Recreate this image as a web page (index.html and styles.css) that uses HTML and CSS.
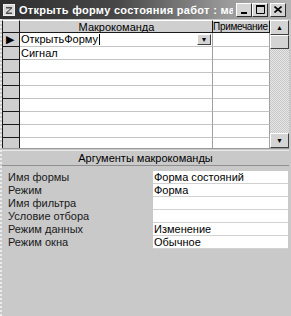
FILE: index.html
```
<!DOCTYPE html>
<html lang="ru">
<head>
    <meta charset="UTF-8">
    <title>Макрос</title>
    <link rel="stylesheet" href="styles.css">
</head>
<body>
    <div class="window">
        <div class="titlebar">
            <svg class="appIcon" width="12" height="12" viewBox="0 0 12 12">
                <rect x="0.5" y="0.5" width="11" height="11" fill="#d8d8d8" stroke="#f0f0f0"/>
                <path d="M3 3h6v1.5L4.5 8.5H9V10H3V8.5L7.5 4.5H3z" fill="#505050"/>
            </svg>
            <div class="titleText">Открыть форму состояния работ : макрос</div>
            <div class="capBtn minBtn">
                <svg width="8" height="8" viewBox="0 0 8 8"><rect x="1" y="6" width="6" height="2" fill="#000"/></svg>
            </div>
            <div class="capBtn">
                <svg width="9" height="9" viewBox="0 0 9 9"><path d="M0.5 1.5h8v7h-8z" fill="none" stroke="#000"/><rect x="0" y="0" width="9" height="2" fill="#000"/></svg>
            </div>
            <div class="capBtn closeBtn">
                <svg width="8" height="7" viewBox="0 0 8 7"><path d="M0.5 0.5l7 6M7.5 0.5l-7 6" stroke="#000" stroke-width="1.6"/></svg>
            </div>
        </div>
        <div class="body">
            <div class="grid">
                <div class="table">
                    <div class="row head">
                        <div class="sel"></div>
                        <div class="cell c1">Макрокоманда</div>
                        <div class="cell c2">Примечание</div>
                    </div>
                    <div class="row first">
                        <div class="sel current">▶</div>
                        <div class="cell c1">ОткрытьФорму<span class="caret"></span><span class="combo">▾</span></div>
                        <div class="cell c2"></div>
                    </div>
                    <div class="row"><div class="sel"></div><div class="cell c1">Сигнал</div><div class="cell c2"></div></div>
                    <div class="row"><div class="sel"></div><div class="cell c1"></div><div class="cell c2"></div></div>
                    <div class="row"><div class="sel"></div><div class="cell c1"></div><div class="cell c2"></div></div>
                    <div class="row"><div class="sel"></div><div class="cell c1"></div><div class="cell c2"></div></div>
                    <div class="row"><div class="sel"></div><div class="cell c1"></div><div class="cell c2"></div></div>
                    <div class="row"><div class="sel"></div><div class="cell c1"></div><div class="cell c2"></div></div>
                    <div class="row"><div class="sel"></div><div class="cell c1"></div><div class="cell c2"></div></div>
                    <div class="row"><div class="sel"></div><div class="cell c1"></div><div class="cell c2"></div></div>
                </div>
                <div class="scrollbar">
                    <div class="sbBtn">▲</div>
                    <div class="thumb"></div>
                    <div class="track"></div>
                    <div class="sbBtn">▼</div>
                </div>
            </div>
            <div class="argsHead">Аргументы макрокоманды</div>
            <div class="props">
                <div class="prop"><div class="label">Имя формы</div><div class="value">Форма состояний</div></div>
                <div class="prop"><div class="label">Режим</div><div class="value">Форма</div></div>
                <div class="prop"><div class="label">Имя фильтра</div><div class="value"></div></div>
                <div class="prop"><div class="label">Условие отбора</div><div class="value"></div></div>
                <div class="prop"><div class="label">Режим данных</div><div class="value">Изменение</div></div>
                <div class="prop"><div class="label">Режим окна</div><div class="value">Обычное</div></div>
            </div>
        </div>
    </div>
</body>
</html>
```

FILE: styles.css
```
html,
body {
    margin: 0;
    padding: 0;
    width: 291px;
    height: 316px;
    overflow: hidden;
    background: #c9c9c9;
    font-family: "Liberation Sans", Arial, sans-serif;
    font-size: 11px;
    color: #000;
}

.window {
    display: flex;
    flex-direction: column;
    width: 291px;
    height: 316px;
}

.titlebar {
    display: flex;
    align-items: center;
    width: 291px;
    height: 19px;
    padding-left: 3px;
    box-sizing: border-box;
    background: linear-gradient(to right, #2f2f2f, #474747 40%, #9a9a9a 78%, #b4b4b4);
}

.appIcon {
    flex: none;
    margin-right: 4px;
}

.titleText {
    flex: none;
    width: 214px;
    overflow: hidden;
    white-space: nowrap;
    color: #fff;
    font-weight: bold;
    font-size: 11px;
    letter-spacing: 0.3px;
}

.capBtn {
    flex: none;
    width: 16px;
    height: 14px;
    box-sizing: border-box;
    background: #d4d4d4;
    border: 1px solid;
    border-color: #fff #303030 #303030 #fff;
    display: flex;
    align-items: center;
    justify-content: center;
}

.minBtn {
    margin-left: 3px;
}

.closeBtn {
    margin-left: 2px;
}

.body {
    flex: 1;
    display: flex;
    flex-direction: column;
    border-left: 2px dotted #ececec;
    padding-top: 1px;
}

.grid {
    display: flex;
    height: 128px;
    margin-right: 2px;
    border-bottom: 1px solid #9a9a9a;
    overflow: hidden;
}

.table {
    width: 268px;
    background: #fff;
}

.row {
    display: flex;
    height: 13px;
    box-sizing: border-box;
}

.row.first {
    height: 14px;
}

.sel {
    width: 18px;
    flex: none;
    box-sizing: border-box;
    background: #cfcfcf;
    border-left: 1px solid #1a1a1a;
    border-right: 1px solid #1a1a1a;
    border-bottom: 1px solid #1a1a1a;
    font-size: 11px;
    line-height: 13px;
    padding-left: 3px;
}

.cell {
    box-sizing: border-box;
    border-right: 1px solid #a0a0a0;
    border-bottom: 1px solid #c4c4c4;
    padding-left: 1px;
    line-height: 12px;
    white-space: nowrap;
    overflow: hidden;
}

.c1 {
    width: 193px;
    position: relative;
}

.c2 {
    width: 57px;
}

.head .sel,
.head .cell {
    background: #cfcfcf;
    border-top: 1px solid #fff;
    border-bottom: 1px solid #1a1a1a;
    border-right: 1px solid #1a1a1a;
}

.head .c1 {
    text-align: center;
}

.head .c2 {
    font-size: 10px;
    letter-spacing: -0.3px;
    padding-left: 0;
}

.first .cell {
    line-height: 13px;
}

.caret {
    display: inline-block;
    width: 1px;
    height: 11px;
    background: #000;
    vertical-align: -2px;
    margin-left: 1px;
}

.combo {
    position: absolute;
    right: 1px;
    top: 1px;
    width: 14px;
    height: 11px;
    box-sizing: border-box;
    background: #d4d4d4;
    border: 1px solid;
    border-color: #fff #404040 #404040 #fff;
    font-size: 8px;
    line-height: 9px;
    text-align: center;
}

.scrollbar {
    width: 19px;
    display: flex;
    flex-direction: column;
    background: repeating-conic-gradient(#e6e6e6 0 25%, #c8c8c8 0 50%) 0 0 / 2px 2px;
}

.sbBtn,
.thumb {
    height: 15px;
    box-sizing: border-box;
    background: #d4d4d4;
    border: 1px solid;
    border-color: #fff #404040 #404040 #fff;
    font-size: 7px;
    line-height: 13px;
    text-align: center;
}

.thumb {
    height: 14px;
}

.track {
    flex: 1;
}

.argsHead {
    height: 14px;
    margin-top: 1px;
    margin-right: 2px;
    text-align: center;
    line-height: 14px;
    border-top: 1px solid #e8e8e8;
    border-bottom: 1px solid #8f8f8f;
}

.props {
    display: flex;
    flex-direction: column;
    padding-top: 5px;
}

.prop {
    display: flex;
    height: 13px;
}

.label {
    width: 151px;
    box-sizing: border-box;
    padding-left: 6px;
    line-height: 13px;
    color: #1a1a1a;
}

.value {
    width: 135px;
    box-sizing: border-box;
    background: #fff;
    border-bottom: 1px solid #d2d2d2;
    line-height: 12px;
    padding-left: 1px;
}
```
